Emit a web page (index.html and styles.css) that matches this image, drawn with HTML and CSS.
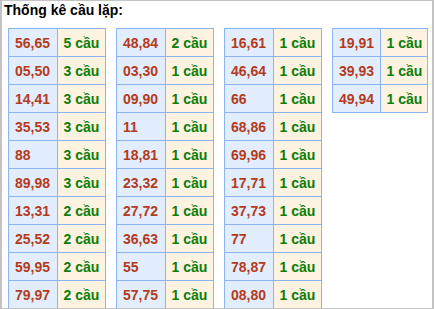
FILE: index.html
```html
<!DOCTYPE html>
<html>
<head>
<meta charset="utf-8">
<link rel="stylesheet" href="styles.css">
</head>
<body>
<div class="frame">
  <div class="title">Thống kê cầu lặp:</div>
  <div class="tables">
    <table class="tk">
      <tr><td class="n">56,65</td><td class="c">5 cầu</td></tr>
      <tr><td class="n">05,50</td><td class="c">3 cầu</td></tr>
      <tr><td class="n">14,41</td><td class="c">3 cầu</td></tr>
      <tr><td class="n">35,53</td><td class="c">3 cầu</td></tr>
      <tr><td class="n">88</td><td class="c">3 cầu</td></tr>
      <tr><td class="n">89,98</td><td class="c">3 cầu</td></tr>
      <tr><td class="n">13,31</td><td class="c">2 cầu</td></tr>
      <tr><td class="n">25,52</td><td class="c">2 cầu</td></tr>
      <tr><td class="n">59,95</td><td class="c">2 cầu</td></tr>
      <tr><td class="n">79,97</td><td class="c">2 cầu</td></tr>
    </table>
    <table class="tk">
      <tr><td class="n">48,84</td><td class="c">2 cầu</td></tr>
      <tr><td class="n">03,30</td><td class="c">1 cầu</td></tr>
      <tr><td class="n">09,90</td><td class="c">1 cầu</td></tr>
      <tr><td class="n">11</td><td class="c">1 cầu</td></tr>
      <tr><td class="n">18,81</td><td class="c">1 cầu</td></tr>
      <tr><td class="n">23,32</td><td class="c">1 cầu</td></tr>
      <tr><td class="n">27,72</td><td class="c">1 cầu</td></tr>
      <tr><td class="n">36,63</td><td class="c">1 cầu</td></tr>
      <tr><td class="n">55</td><td class="c">1 cầu</td></tr>
      <tr><td class="n">57,75</td><td class="c">1 cầu</td></tr>
    </table>
    <table class="tk">
      <tr><td class="n">16,61</td><td class="c">1 cầu</td></tr>
      <tr><td class="n">46,64</td><td class="c">1 cầu</td></tr>
      <tr><td class="n">66</td><td class="c">1 cầu</td></tr>
      <tr><td class="n">68,86</td><td class="c">1 cầu</td></tr>
      <tr><td class="n">69,96</td><td class="c">1 cầu</td></tr>
      <tr><td class="n">17,71</td><td class="c">1 cầu</td></tr>
      <tr><td class="n">37,73</td><td class="c">1 cầu</td></tr>
      <tr><td class="n">77</td><td class="c">1 cầu</td></tr>
      <tr><td class="n">78,87</td><td class="c">1 cầu</td></tr>
      <tr><td class="n">08,80</td><td class="c">1 cầu</td></tr>
    </table>
    <table class="tk last">
      <tr><td class="n">19,91</td><td class="c">1 cầu</td></tr>
      <tr><td class="n">39,93</td><td class="c">1 cầu</td></tr>
      <tr><td class="n">49,94</td><td class="c">1 cầu</td></tr>
    </table>
  </div>
</div>
</body>
</html>
```
FILE: styles.css
```css
html, body {
  margin: 0;
  padding: 0;
  background: #ffffff;
}
.frame {
  box-sizing: border-box;
  width: 434px;
  height: 309px;
  overflow: hidden;
  border-style: solid;
  border-color: #c4c4c4;
  border-width: 1px 2px 1px 2px;
  padding: 0 0 0 2px;
  font-family: "Liberation Sans", Arial, sans-serif;
}
.title {
  font-size: 14px;
  font-weight: bold;
  color: #000;
  line-height: 16px;
  padding-top: 1px;
  height: 26px;
}
.tables {
  display: flex;
  align-items: flex-start;
  padding-left: 4px;
}
.tk {
  border-collapse: collapse;
  table-layout: fixed;
  width: 98px;
  margin-right: 10px;
  flex: none;
}
.tk.last {
  width: 96px;
  margin-right: 0;
}
.tk td {
  border: 1px solid #8db4f2;
  height: 28px;
  padding: 0 0 0 6px;
  box-sizing: border-box;
  font-size: 14px;
  font-weight: bold;
  text-align: left;
  vertical-align: middle;
  white-space: nowrap;
  overflow: hidden;
}
.tk td.n {
  width: 50%;
  background: #e2edfd;
  color: #b33b1c;
}
.tk td.c {
  background: #fef3e0;
  color: #0b7d0b;
}
```
